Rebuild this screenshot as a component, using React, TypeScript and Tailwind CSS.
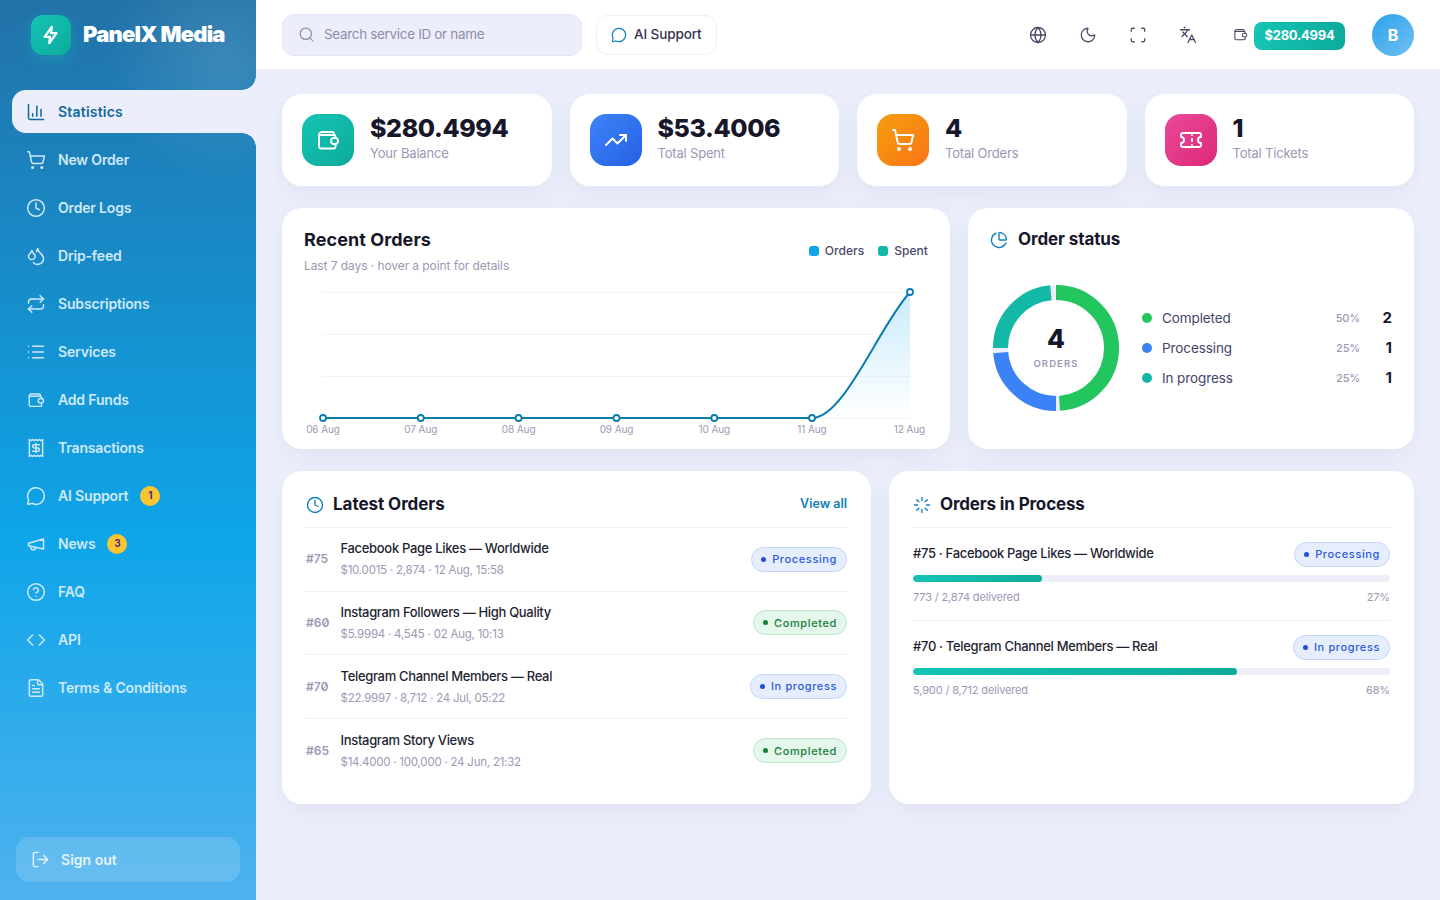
import {
  ChartColumn, ShoppingCart, Clock, Droplets, Repeat, List, Receipt, MessageCircle, CircleHelp,
  Code, FileText, LogOut, Search, Globe, Moon, Scan, Languages, TrendingUp, Ticket, ChartPie, Loader,
} from 'lucide-react'

type IconProps = { size?: number; strokeWidth?: number; className?: string }

// lucide's wallet has another shape, this one follows the picture
function WalletIcon({ size = 20, strokeWidth = 1.8, className }: IconProps) {
  return (
    <svg width={size} height={size} viewBox="0 0 24 24" fill="none" stroke="currentColor" strokeWidth={strokeWidth} strokeLinecap="round" strokeLinejoin="round" className={className}>
      <path d="M3 7a3 3 0 0 1 3-3h10a2 2 0 0 1 2 2v1" />
      <path d="M19.5 10V9a2 2 0 0 0-2-2H3v11a2.5 2.5 0 0 0 2.5 2.5h12a2 2 0 0 0 2-2V16" />
      <rect x="15" y="10" width="7" height="6" rx="3" />
    </svg>
  )
}

function MegaphoneIcon({ size = 20, strokeWidth = 1.8, className }: IconProps) {
  return (
    <svg width={size} height={size} viewBox="0 0 24 24" fill="none" stroke="currentColor" strokeWidth={strokeWidth} strokeLinecap="round" strokeLinejoin="round" className={className}>
      <path d="m3 11 18-5v12L3 14z" />
      <path d="M11.6 16.8a3 3 0 1 1-5.8-1.6" />
    </svg>
  )
}

const navItems = [
  { label: 'Statistics', icon: ChartColumn, active: true },
  { label: 'New Order', icon: ShoppingCart },
  { label: 'Order Logs', icon: Clock },
  { label: 'Drip-feed', icon: Droplets },
  { label: 'Subscriptions', icon: Repeat },
  { label: 'Services', icon: List },
  { label: 'Add Funds', icon: WalletIcon, size: 18 },
  { label: 'Transactions', icon: Receipt },
  { label: 'AI Support', icon: MessageCircle, badge: '1' },
  { label: 'News', icon: MegaphoneIcon, badge: '3' },
  { label: 'FAQ', icon: CircleHelp },
  { label: 'API', icon: Code },
  { label: 'Terms & Conditions', icon: FileText },
]

const stats = [
  { value: '$280.4994', label: 'Your Balance', icon: WalletIcon, tone: 'from-[#14c4b4] to-[#0dab9c]' },
  { value: '$53.4006', label: 'Total Spent', icon: TrendingUp, tone: 'from-[#3f83f8] to-[#2560e4]' },
  { value: '4', label: 'Total Orders', icon: ShoppingCart, tone: 'from-[#f59e0b] to-[#f97316]' },
  { value: '1', label: 'Total Tickets', icon: Ticket, tone: 'from-[#ec4899] to-[#db2777]' },
]

const latestOrders = [
  { id: '#75', name: 'Facebook Page Likes — Worldwide', meta: '$10.0015 · 2,874 · 12 Aug, 15:58', status: 'Processing' },
  { id: '#60', name: 'Instagram Followers — High Quality', meta: '$5.9994 · 4,545 · 02 Aug, 10:13', status: 'Completed' },
  { id: '#70', name: 'Telegram Channel Members — Real', meta: '$22.9997 · 8,712 · 24 Jul, 05:22', status: 'In progress' },
  { id: '#65', name: 'Instagram Story Views', meta: '$14.4000 · 100,000 · 24 Jun, 21:32', status: 'Completed' },
]

const inProcess = [
  { title: '#75 · Facebook Page Likes — Worldwide', status: 'Processing', delivered: '773 / 2,874 delivered', pct: 27 },
  { title: '#70 · Telegram Channel Members — Real', status: 'In progress', delivered: '5,900 / 8,712 delivered', pct: 68 },
]

const statusRows = [
  { label: 'Completed', pct: '50%', count: 2, dot: 'bg-[#22c55e]' },
  { label: 'Processing', pct: '25%', count: 1, dot: 'bg-[#3b82f6]' },
  { label: 'In progress', pct: '25%', count: 1, dot: 'bg-[#14b8a6]' },
]

const days = ['06 Aug', '07 Aug', '08 Aug', '09 Aug', '10 Aug', '11 Aug', '12 Aug']

function Sidebar() {
  return (
    <aside className="w-[256px] shrink-0 h-[900px] flex flex-col bg-[radial-gradient(circle_at_88%_7%,rgba(255,255,255,0.12),transparent_120px),linear-gradient(180deg,#2272a8_0%,#0ea5e9_60%,#4fb2ee_100%)]">
      <div className="h-[90px] shrink-0 pl-[31px] pt-[15px] flex items-start gap-3">
        <div className="w-10 h-10 rounded-xl bg-gradient-to-br from-[#14c4b4] to-[#0dab9c] flex items-center justify-center shadow-[0_6px_16px_rgba(20,196,180,0.3)]">
          <svg width="22" height="22" viewBox="0 0 24 24" fill="none" stroke="white" strokeWidth="2.4" strokeLinecap="round" strokeLinejoin="round">
            <path d="M13 3 5 14h6l-1 7 8-11h-6z" />
          </svg>
        </div>
        <span className="text-[22px] leading-10 font-black tracking-[-0.78px] text-white whitespace-nowrap -mt-[1px]">PanelX Media</span>
      </div>
      <nav className="flex flex-col gap-[5px] pl-3">
        {navItems.map((item) => (
          <div
            key={item.label}
            className={
              item.active
                ? 'relative h-[43px] flex items-center gap-3 pl-[14px] rounded-l-[14px] bg-[#eceffb] text-[#0f6a9c]'
                : 'h-[43px] flex items-center gap-3 pl-[14px] text-[#cfe9fa]'
            }
          >
            <span className="w-5 flex justify-center shrink-0">
              <item.icon size={item.size ?? 20} strokeWidth={1.8} />
            </span>
            <span className={item.active ? 'text-[14px] font-semibold tracking-[0.2px] whitespace-nowrap' : 'text-[14px] font-semibold tracking-[-0.17px] whitespace-nowrap'}>{item.label}</span>
            {item.badge && (
              <span className="w-5 h-5 rounded-full bg-[#fbc531] text-[#4b2a7b] text-[10px] font-bold flex items-center justify-center">{item.badge}</span>
            )}
            {item.active && (
              <>
                <span className="absolute right-0 top-[-14px] w-[14px] h-[14px] bg-[radial-gradient(circle_at_0_0,transparent_13.5px,#eceffb_14px)]" />
                <span className="absolute right-0 bottom-[-14px] w-[14px] h-[14px] bg-[radial-gradient(circle_at_0_100%,transparent_13.5px,#eceffb_14px)]" />
              </>
            )}
          </div>
        ))}
      </nav>
      <div className="mt-auto mx-4 mb-[18px] h-[45px] rounded-[14px] bg-white/15 flex items-center gap-[11px] pl-[15px] text-[#e3f3fd]">
        <LogOut size={19} strokeWidth={1.8} />
        <span className="text-[14px] font-semibold tracking-[0.02px]">Sign out</span>
      </div>
    </aside>
  )
}

function Topbar() {
  return (
    <header className="h-[69px] bg-white flex items-center pl-[26px] pr-[26px]">
      <div className="w-[300px] h-[42px] rounded-xl bg-[#eceffb] border border-[#e5e7f6] flex items-center gap-[9px] pl-[15px]">
        <Search size={17} strokeWidth={1.7} className="text-[#8f8ca8]" />
        <span className="text-[13.5px] text-[#8f8ca8] tracking-[-0.33px]">Search service ID or name</span>
      </div>
      <div className="ml-[14px] w-[121px] h-10 rounded-xl border border-[#eceffb] flex items-center gap-[7px] pl-[14px]">
        <MessageCircle size={16} strokeWidth={1.8} className="text-[#1280b8]" />
        <span className="text-[13.5px] font-medium text-[#33334d] tracking-[-0.1px]">AI Support</span>
      </div>
      <div className="ml-auto flex items-center text-[#4a4a66]">
        <Globe size={18} strokeWidth={1.7} />
        <Moon size={18} strokeWidth={1.7} className="ml-8" />
        <Scan size={18} strokeWidth={1.7} className="ml-8" />
        <Languages size={18} strokeWidth={1.7} className="ml-8" />
        <WalletIcon size={15} strokeWidth={1.7} className="ml-[36px]" />
        <span className="ml-[6px] mt-[2px] w-[91px] h-7 rounded-lg bg-gradient-to-r from-[#14c4b4] to-[#0dab9c] text-white text-[13px] font-bold tracking-[-0.25px] flex items-center justify-center">$280.4994</span>
        <span className="ml-[27px] w-[42px] h-[42px] rounded-full bg-gradient-to-br from-[#22a3ea] to-[#6fbff2] text-white text-[16px] font-bold flex items-center justify-center">B</span>
      </div>
    </header>
  )
}

function StatusBadge({ status }: { status: string }) {
  const done = status === 'Completed'
  return (
    <span
      className={
        done
          ? 'h-[25px] px-[9px] rounded-full border border-[#b9e8ca] bg-[#e5f6eb] text-[#15803d] text-[11px] font-medium tracking-[0.62px] flex items-center gap-[6px] whitespace-nowrap'
          : 'h-[25px] px-[9px] rounded-full border border-[#c3d5fb] bg-[#e6eefd] text-[#2b59d9] text-[11px] font-medium tracking-[0.62px] flex items-center gap-[6px] whitespace-nowrap'
      }
    >
      <span className={done ? 'w-[5px] h-[5px] rounded-full bg-[#15803d]' : 'w-[5px] h-[5px] rounded-full bg-[#2350d8]'} />
      {status}
    </span>
  )
}

function OrdersChart() {
  const xs = [323, 420.8, 518.6, 616.5, 714.3, 812, 910].map((x) => x - 304)
  const base = 126
  return (
    <svg width="624" height="148" viewBox="0 0 624 148" className="block mt-[18px] overflow-visible">
      <defs>
        <linearGradient id="chartFill" x1="0" y1="0" x2="0" y2="1">
          <stop offset="0%" stopColor="#0ea5e9" stopOpacity="0.22" />
          <stop offset="100%" stopColor="#0ea5e9" stopOpacity="0" />
        </linearGradient>
      </defs>
      {[0, 42, 84, 126].map((y) => (
        <line key={y} x1={19} x2={606} y1={y} y2={y} stroke="#f3f4fb" strokeWidth="1" transform="translate(0 0.5)" />
      ))}
      <path d={`M508 ${base} C540 ${base} 574 36 606 0 L606 ${base} Z`} fill="url(#chartFill)" />
      <path d={`M19 ${base} L508 ${base} C540 ${base} 574 36 606 0`} fill="none" stroke="#0a7cae" strokeWidth="2" />
      {xs.map((x, i) => (
        <circle key={x} cx={x} cy={i === 6 ? 0 : base} r="3" fill="white" stroke="#0a7cae" strokeWidth="1.8" />
      ))}
      {xs.map((x, i) => (
        <text key={days[i]} x={i === 6 ? x - 0.5 : x} y={base + 15} textAnchor="middle" fontSize="10" letterSpacing="-0.1" fill="#9b98b4">{days[i]}</text>
      ))}
    </svg>
  )
}

function Donut() {
  const r = 55.5
  const c = 2 * Math.PI * r
  const arcs = [
    { from: 0, to: 176, color: '#22c55e' },
    { from: 180, to: 265, color: '#3b82f6' },
    { from: 270, to: 354.5, color: '#14b8a6' },
  ]
  return (
    <div className="relative w-[126px] h-[126px] shrink-0">
      <svg width="126" height="126" viewBox="0 0 126 126" className="block">
        <circle cx="63" cy="63" r={r} fill="none" stroke="#eceffb" strokeWidth="15" />
        {arcs.map((a) => (
          <circle
            key={a.color}
            cx="63"
            cy="63"
            r={r}
            fill="none"
            stroke={a.color}
            strokeWidth="15"
            strokeDasharray={`${((a.to - a.from) / 360) * c} ${c}`}
            transform={`rotate(${a.from - 90} 63 63)`}
          />
        ))}
      </svg>
      <div className="absolute inset-0 flex flex-col items-center justify-center">
        <span className="text-[26px] leading-[30px] font-extrabold text-[#17172b]">4</span>
        <span className="text-[9.5px] font-semibold tracking-[1.1px] text-[#9b98b4] mt-[3px]">ORDERS</span>
      </div>
    </div>
  )
}

export default function App() {
  return (
    <div className="w-[1440px] h-[900px] flex bg-[#eceffb] overflow-hidden font-['Inter',sans-serif]">
      <Sidebar />
      <main className="flex-1 min-w-0">
        <Topbar />
        <div className="pl-[26px] pr-[26px] pt-[25px] flex flex-col gap-[22px]">
          <section className="grid grid-cols-4 gap-[18px]">
            {stats.map((s) => (
              <div key={s.label} className="h-[92px] rounded-[20px] bg-white shadow-[0_8px_24px_rgba(90,90,170,0.08)] flex items-center gap-4 pl-5">
                <div className={`w-[52px] h-[52px] rounded-2xl bg-gradient-to-br ${s.tone} text-white flex items-center justify-center`}>
                  <s.icon size={24} strokeWidth={1.9} />
                </div>
                <div className="-mt-[4px]">
                  <div className="text-[25px] leading-[28px] font-extrabold tracking-[-0.4px] text-[#17172b]">{s.value}</div>
                  <div className="text-[13px] leading-[18px] mt-[2px] text-[#9b98b4] tracking-[-0.18px]">{s.label}</div>
                </div>
              </div>
            ))}
          </section>

          <section className="grid grid-cols-[668px_446px] gap-[18px]">
            <div className="h-[241px] rounded-[20px] bg-white shadow-[0_8px_24px_rgba(90,90,170,0.08)] pl-[22px] pr-[22px] pt-[20px]">
              <div className="flex justify-between">
                <div>
                  <h2 className="text-[18px] leading-6 font-bold tracking-[0.08px] text-[#17172b]">Recent Orders</h2>
                  <p className="text-[12px] leading-4 mt-[6px] text-[#9b98b4] tracking-[-0.08px]">Last 7 days · hover a point for details</p>
                </div>
                <div className="flex items-center gap-[14px] text-[12px] font-medium tracking-[0.05px] text-[#4a4a66] h-4 mt-[15px]">
                  <span className="flex items-center gap-[6px]"><i className="w-[10px] h-[10px] rounded-[3px] bg-[#0ea5e9]" />Orders</span>
                  <span className="flex items-center gap-[6px]"><i className="w-[10px] h-[10px] rounded-[3px] bg-[#14b8a6]" />Spent</span>
                </div>
              </div>
              <OrdersChart />
            </div>

            <div className="h-[241px] rounded-[20px] bg-white shadow-[0_8px_24px_rgba(90,90,170,0.08)] pl-[22px] pr-[22px] pt-5">
              <div className="flex items-center gap-[10px] h-6">
                <ChartPie size={18} strokeWidth={1.8} className="text-[#1280b8]" />
                <h2 className="text-[17px] font-bold tracking-[-0.1px] text-[#17172b]">Order status</h2>
              </div>
              <div className="flex items-center mt-[33px] pl-[3px] gap-[23px]">
                <Donut />
                <div className="flex-1 flex flex-col gap-[10px]">
                  {statusRows.map((row) => (
                    <div key={row.label} className="h-5 flex items-center">
                      <span className={`w-[10px] h-[10px] rounded-full ${row.dot}`} />
                      <span className="ml-[10px] text-[13.5px] text-[#45456a] tracking-[-0.1px]">{row.label}</span>
                      <span className="ml-auto text-[11px] font-medium tracking-[-0.2px] text-[#9b98b4]">{row.pct}</span>
                      <span className="w-8 text-right text-[15px] font-bold text-[#17172b]">{row.count}</span>
                    </div>
                  ))}
                </div>
              </div>
            </div>
          </section>

          <section className="grid grid-cols-[589px_525px] gap-[18px]">
            <div className="h-[333px] rounded-[20px] bg-white shadow-[0_8px_24px_rgba(90,90,170,0.08)] pl-6 pr-6">
              <div className="h-[57px] flex items-center border-b border-[#eef0f9] pt-[12px]">
                <Clock size={18} strokeWidth={1.8} className="text-[#1280b8]" />
                <h2 className="ml-[9px] text-[17px] font-bold tracking-[-0.05px] text-[#17172b]">Latest Orders</h2>
                <span className="ml-auto text-[12.5px] font-semibold text-[#0f7fb5] -mt-[2px]">View all</span>
              </div>
              {latestOrders.map((o, i) => (
                <div key={o.id} className={i < 3 ? 'h-[63.67px] flex items-center border-b border-[#eef0f9]' : 'h-[63.67px] flex items-center'}>
                  <span className="w-[34.5px] shrink-0 text-[12px] font-semibold text-[#9b98b4] slashed-zero">{o.id}</span>
                  <div className="flex-1 min-w-0 -mt-[2px]">
                    <div className="text-[13px] leading-5 font-medium tracking-[-0.32px] text-[#1f1f33]">{o.name}</div>
                    <div className="text-[11.5px] leading-4 mt-[4px] tracking-[-0.23px] text-[#9b98b4]">{o.meta}</div>
                  </div>
                  <StatusBadge status={o.status} />
                </div>
              ))}
            </div>

            <div className="h-[333px] rounded-[20px] bg-white shadow-[0_8px_24px_rgba(90,90,170,0.08)] pl-6 pr-6">
              <div className="h-[57px] flex items-center border-b border-[#eef0f9] pt-[12px]">
                <Loader size={18} strokeWidth={1.8} className="text-[#1280b8]" />
                <h2 className="ml-[9px] text-[17px] font-bold tracking-[-0.15px] text-[#17172b]">Orders in Process</h2>
              </div>
              {inProcess.map((p, i) => (
                <div key={p.title} className={i === 0 ? 'h-[93px] pt-[14px] border-b border-[#eef0f9]' : 'h-[93px] pt-[14px]'}>
                  <div className="flex items-center justify-between">
                    <span className="text-[13px] -mt-[2px] font-medium tracking-[-0.32px] text-[#1f1f33]">{p.title}</span>
                    <StatusBadge status={p.status} />
                  </div>
                  <div className="mt-[8px] h-[7px] rounded-full bg-[#eeeef8] overflow-hidden">
                    <div className="h-full rounded-full bg-gradient-to-r from-[#14c4b4] to-[#0dab9c]" style={{ width: `${p.pct}%` }} />
                  </div>
                  <div className="mt-[7px] flex justify-between text-[11px] leading-4 tracking-[-0.15px] text-[#9b98b4]">
                    <span>{p.delivered}</span>
                    <span>{p.pct}%</span>
                  </div>
                </div>
              ))}
            </div>
          </section>
        </div>
      </main>
    </div>
  )
}
